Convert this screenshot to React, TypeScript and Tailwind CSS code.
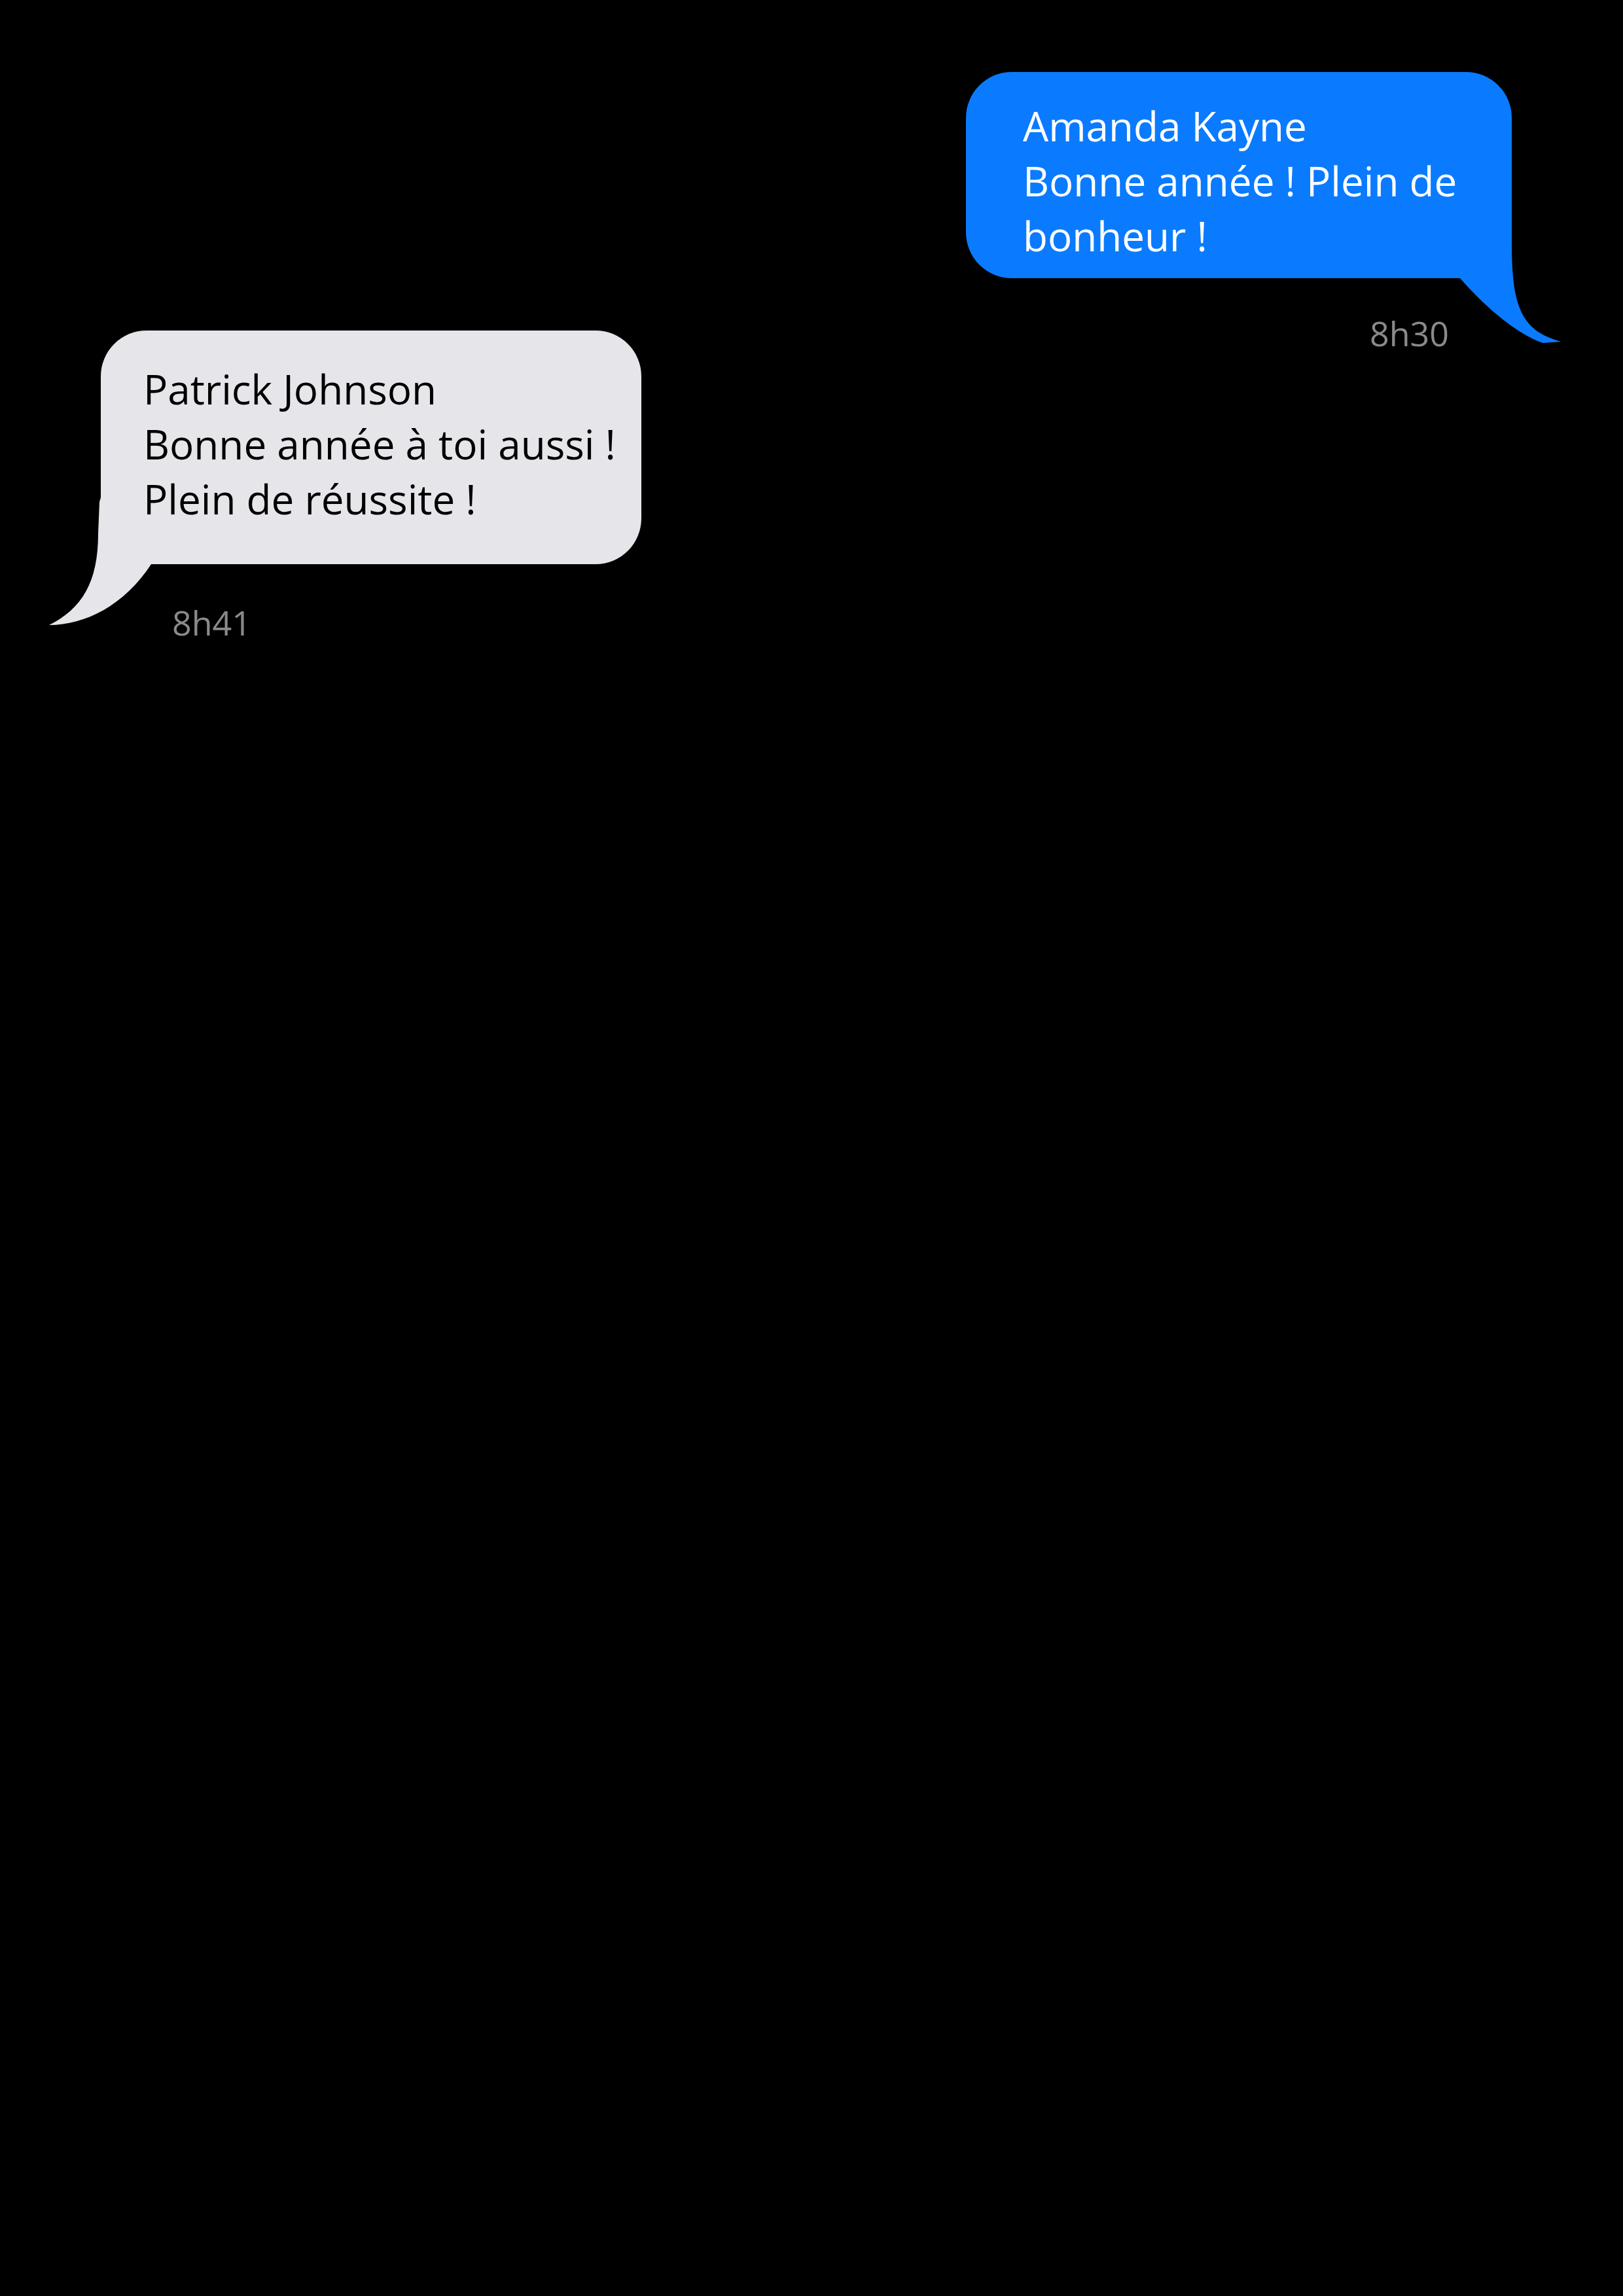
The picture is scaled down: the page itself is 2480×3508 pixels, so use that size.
export default function App() {
  return (
    <div className="min-h-[3508px] w-[2480px] bg-black pt-[110px] font-['Open_Sans','Lato',sans-serif]">
      {/* Outgoing message */}
      <div className="flex flex-col items-end pr-[170px]">
        <div className="relative w-[834px] rounded-[70px] rounded-br-none bg-[#0a7bff] pl-[87px] pr-[20px] pt-[40px] pb-[23px] text-[62px] leading-[84px] text-white">
          <svg className="absolute left-[744px] top-[250px]" width="170" height="166" viewBox="0 0 170 166">
            <path
              d="M 11 0 L 90 0 L 90 10 C 90 110, 105 145, 165 162 L 138 164 C 100 152, 50 110, 11 65 Z"
              fill="#0a7bff"
            />
          </svg>
          <div className="relative">
            <p>Amanda Kayne</p>
            <p>Bonne année ! Plein de bonheur !</p>
          </div>
        </div>
        <div className="mt-[69px] mr-[96px] text-[52px] leading-[30px] text-[#8a8a8a]">8h30</div>
      </div>

      {/* Incoming message */}
      <div className="-mt-[19px] flex flex-col items-start pl-[154px]">
        <div className="relative w-[826px] rounded-[70px] rounded-bl-none bg-[#e5e5ea] pl-[65px] pr-[10px] pt-[47px] pb-[58px] text-[62px] leading-[84px] text-black">
          <svg className="absolute -left-[84px] top-[255px]" width="170" height="200" viewBox="0 0 170 200">
            <path
              d="M 84 0 L 161 0 L 161 102 C 120 165, 60 195, 5 195 C 55 170, 80 130, 80 55 L 82 7 Z"
              fill="#e5e5ea"
            />
          </svg>
          <div className="relative">
            <p>Patrick Johnson</p>
            <p>Bonne année à toi aussi !</p>
            <p>Plein de réussite !</p>
          </div>
        </div>
        <div className="mt-[74px] ml-[109px] text-[52px] leading-[30px] text-[#8a8a8a]">8h41</div>
      </div>
    </div>
  );
}
